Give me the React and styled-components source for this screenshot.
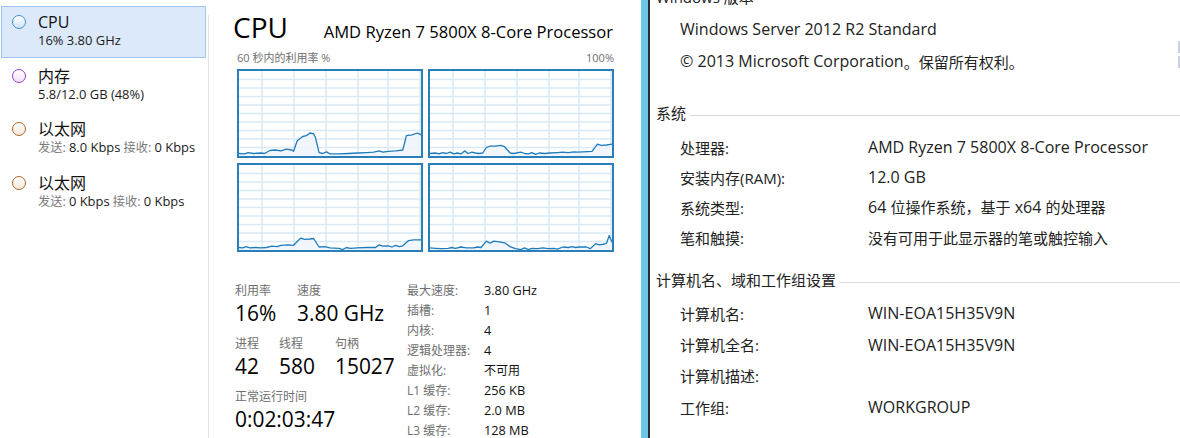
import React from "react";
import styled, { createGlobalStyle } from "styled-components";

const FONT = `"Open Sans", "Noto Sans CJK SC", sans-serif`;

const GlobalStyle = createGlobalStyle`
  html, body {
    margin: 0;
    padding: 0;
    background: #ffffff;
  }
  body {
    font-family: ${FONT};
    color: #1a1a1a;
    overflow: hidden;
    --latin: 1.045;
  }
  * {
    box-sizing: border-box;
  }
`;

const Latin = styled.span`
  font-size: calc(var(--latin) * 1em);
`;

const CJK_RUN = /([\u2e80-\u9fff\u3000-\u303f\uff00-\uffef]+)/;

const T = ({ children }) =>
  String(children)
    .split(CJK_RUN)
    .map((s, i) => (i % 2 ? s : s ? <Latin key={i}>{s}</Latin> : null));

const Page = styled.div`
  display: flex;
  width: 1180px;
  height: 438px;
  overflow: hidden;
`;

/* ---------- sidebar ---------- */

const Sidebar = styled.div`
  width: 209px;
  flex-shrink: 0;
  padding-top: 6px;
  position: relative;

  &::after {
    content: "";
    position: absolute;
    right: 0;
    top: 15px;
    bottom: 0;
    width: 1px;
    background: #e4e4e4;
  }
`;

const Item = styled.div`
  display: flex;
  width: 205px;
  height: 52px;
  margin: 0 0 1.6px 1px;
  padding: 6px 0 0 10px;
  border: 1px solid ${(p) => (p.$active ? "#9dc6ef" : "transparent")};
  background: ${(p) => (p.$active ? "#dbe9fb" : "transparent")};
  gap: 12px;
`;

const Dot = styled.span`
  width: 14px;
  height: 14px;
  margin-top: 2px;
  border-radius: 50%;
  border: 1.5px solid ${(p) => p.$color};
  background: linear-gradient(180deg, #ffffff 0%, ${(p) => p.$fill} 100%);
  flex-shrink: 0;
`;

const ItemText = styled.div`
  display: flex;
  flex-direction: column;
`;

const ItemTitle = styled.div`
  font-size: 16px;
  line-height: 19px;
  color: #111;
  --latin: 1;
`;

const ItemSub = styled.div`
  font-size: 12.2px;
  line-height: 16px;
  color: #1a1a1a;
  white-space: nowrap;
  --latin: 1.06;
`;

const Muted = styled.span`
  color: #7a7a7a;
`;

/* ---------- task manager main ---------- */

const Main = styled.div`
  width: 432px;
  flex-shrink: 0;
  padding: 0 27px 0 28px;
`;

const Header = styled.div`
  display: flex;
  align-items: baseline;
  justify-content: space-between;
  height: 50px;
  padding-top: 9px;
  margin-left: -4px;
`;

const BigTitle = styled.div`
  font-size: 28px;
  line-height: 36px;
  color: #000;
  --latin: 1;
`;

const Model = styled.div`
  font-size: 16px;
  line-height: 24px;
  color: #000;
  margin-right: 1px;
  --latin: 1.036;
`;

const GraphCaption = styled.div`
  display: flex;
  justify-content: space-between;
  font-size: 11px;
  line-height: 16px;
  height: 19px;
  color: #6f6f6f;
  --latin: 1;
`;

const GraphGrid = styled.div`
  display: grid;
  grid-template-columns: 186px 186px;
  grid-template-rows: 89px 89px;
  gap: 5px;
`;

const GraphBox = styled.div`
  border: 2px solid #2a7fba;
  background: #ffffff;
  overflow: hidden;

  svg {
    display: block;
  }
`;

const Stats = styled.div`
  display: flex;
  margin-top: 28px;
  margin-left: -2px;
`;

const StatsLeft = styled.div`
  width: 172px;
  padding-top: 3px;
`;

const StatRow = styled.div`
  display: flex;
  margin-bottom: 8px;
`;

const Stat = styled.div`
  width: ${(p) => p.$w || "auto"};
`;

const StatLabel = styled.div`
  font-size: 12px;
  line-height: 16px;
  color: #6f6f6f;
  white-space: nowrap;
`;

const StatValue = styled.div`
  font-size: 20px;
  line-height: 28px;
  color: #000;
  white-space: nowrap;
`;

const Specs = styled.div`
  display: grid;
  grid-template-columns: 77px auto;
  grid-auto-rows: 20px;
  align-items: center;
  font-size: 12px;
  --latin: 1.06;
`;

const SpecLabel = styled.div`
  color: #6f6f6f;
  white-space: nowrap;
  --latin: 1;
`;

const SpecValue = styled.div`
  color: #111;
  white-space: nowrap;
`;

/* ---------- system properties ---------- */

const Divider = styled.div`
  width: 9px;
  flex-shrink: 0;
  background: #6ac9ea;
  border-right: 2px solid #2d2d2d;
`;

const Props = styled.div`
  flex: 1;
  position: relative;
  padding-left: 6px;
  font-size: 15px;
  color: #222;
  --latin: 1.07;
`;

const Section = styled.div`
  display: flex;
  align-items: center;
  height: 20px;
  margin-top: ${(p) => p.$mt}px;
  white-space: nowrap;

  &::after {
    content: "";
    flex: 1;
    height: 1px;
    margin: 6px 0 0 4px;
    background: #dadada;
  }
`;

const PropRows = styled.div`
  padding: ${(p) => p.$pt}px 0 0 24px;
`;

const PropRow = styled.div`
  display: flex;
  align-items: center;
  height: ${(p) => p.$h}px;
  white-space: nowrap;
`;

const PropLabel = styled.div`
  width: 188px;
  --latin: 1;
`;

const ScrollNub = styled.div`
  position: absolute;
  right: 0;
  top: 41px;
  width: 2px;
  height: 27px;
  border-top: 12px solid #c9d1e2;
  border-bottom: 12px solid #c9d1e2;
  background: #ffffff;
`;

/* ---------- graph data ---------- */

const graphs = [
  [[0,3],[0.03,2.5],[0.05,4],[0.08,3],[0.12,3.5],[0.14,3],[0.17,6.5],[0.2,7],[0.23,6],[0.26,8],[0.29,7],[0.3,5.5],[0.32,18],[0.35,23],[0.37,24],[0.39,27],[0.41,26],[0.42,22],[0.44,4],[0.46,3],[0.48,5],[0.5,2.5],[0.55,2.5],[0.6,3],[0.65,3.5],[0.7,4],[0.74,4.5],[0.77,6],[0.79,4.5],[0.82,5.5],[0.86,6],[0.9,7],[0.92,24],[0.95,25],[0.98,27],[1,25]],
  [[0,3],[0.03,3.5],[0.05,2.5],[0.07,4],[0.09,3],[0.11,4.5],[0.13,2.5],[0.15,3.5],[0.17,2.5],[0.19,6],[0.21,3],[0.23,4.5],[0.25,3.5],[0.27,3],[0.29,3.5],[0.31,10],[0.33,11.5],[0.36,11.5],[0.39,12.5],[0.41,11],[0.44,3.5],[0.46,3],[0.5,4.5],[0.52,3],[0.54,2.5],[0.56,4],[0.58,2],[0.6,3.5],[0.63,3],[0.66,3.5],[0.7,4],[0.73,4.5],[0.76,4],[0.79,5],[0.81,4.5],[0.84,5],[0.89,5.5],[0.92,14],[0.94,12.5],[0.97,13],[1,14]],
  [[0,3],[0.02,2.5],[0.04,4],[0.06,2.5],[0.09,3],[0.12,2.5],[0.15,3],[0.18,4.5],[0.21,4],[0.23,5.5],[0.27,6],[0.3,5.5],[0.32,10],[0.34,14],[0.36,12.5],[0.39,13],[0.41,13.5],[0.44,3.5],[0.47,4],[0.5,2.5],[0.55,2],[0.57,0.5],[0.59,3],[0.61,2],[0.65,2.5],[0.7,3],[0.75,3],[0.77,6],[0.79,4.5],[0.82,5],[0.84,3.5],[0.86,5.5],[0.88,4],[0.9,5],[0.93,11],[0.96,12],[1,12]],
  [[0,2.5],[0.03,2],[0.06,1.5],[0.1,2],[0.12,3],[0.14,2],[0.17,3.5],[0.2,2.5],[0.24,2.5],[0.26,3.5],[0.28,3],[0.31,10.5],[0.33,8],[0.35,10.5],[0.38,9.5],[0.41,8.5],[0.44,4],[0.47,1.5],[0.5,0.5],[0.52,2.5],[0.54,0.5],[0.56,2],[0.59,1.5],[0.62,2.5],[0.65,1.5],[0.68,2],[0.7,1],[0.73,3.5],[0.76,3],[0.78,4],[0.8,3],[0.82,3.5],[0.86,3.5],[0.88,1.5],[0.91,7.5],[0.93,6],[0.96,7],[0.97,8],[0.985,17],[1,9]],
];

const GW = 182;
const GH = 85;

const Graph = ({ data }) => {
  const pts = data.map(([x, v]) => [x * GW, GH - (v / 100) * GH]);
  const line = pts.map(([x, y]) => `${x.toFixed(1)},${y.toFixed(1)}`).join(" ");
  const area = `0,${GH} ${line} ${GW},${GH}`;
  const vLines = [23, 55, 87, 119, 149, 181];
  const hLines = Array.from({ length: 9 }, (_, i) => ((i + 1) * GH) / 10);
  return (
    <GraphBox>
      <svg width={GW} height={GH} viewBox={`0 0 ${GW} ${GH}`}>
        {hLines.map((y) => (
          <line key={"h" + y} x1="0" x2={GW} y1={y} y2={y} stroke="#d9e9f6" strokeWidth="1.5" />
        ))}
        {vLines.map((x) => (
          <line key={"v" + x} x1={x} x2={x} y1="0" y2={GH} stroke="#d9e9f6" strokeWidth="1.5" />
        ))}
        <polygon points={area} fill="#eef5fb" fillOpacity="0.85" />
        <polyline points={line} fill="none" stroke="#1e7cbc" strokeWidth="1.3" strokeLinejoin="round" />
      </svg>
    </GraphBox>
  );
};

const sidebarItems = [
  { key: "cpu", title: "CPU", color: "#3f8fd2", fill: "#cfe3f6", active: true, sub: <T>16% 3.80 GHz</T> },
  { key: "mem", title: "内存", color: "#9b3fc6", fill: "#f1e1f7", sub: <T>5.8/12.0 GB (48%)</T> },
  {
    key: "eth1",
    title: "以太网",
    color: "#b0682a",
    fill: "#f6e6d8",
    sub: (
      <>
        <Muted><T>发送:</T></Muted> <T>8.0 Kbps</T> <Muted><T>接收:</T></Muted> <T>0 Kbps</T>
      </>
    ),
  },
  {
    key: "eth2",
    title: "以太网",
    color: "#b0682a",
    fill: "#f6e6d8",
    sub: (
      <>
        <Muted><T>发送:</T></Muted> <T>0 Kbps</T> <Muted><T>接收:</T></Muted> <T>0 Kbps</T>
      </>
    ),
  },
];

const specs = [
  ["最大速度:", "3.80 GHz"],
  ["插槽:", "1"],
  ["内核:", "4"],
  ["逻辑处理器:", "4"],
  ["虚拟化:", "不可用"],
  ["L1 缓存:", "256 KB"],
  ["L2 缓存:", "2.0 MB"],
  ["L3 缓存:", "128 MB"],
];

const systemRows = [
  ["处理器:", "AMD Ryzen 7 5800X 8-Core Processor"],
  ["安装内存(RAM):", "12.0 GB"],
  ["系统类型:", "64 位操作系统，基于 x64 的处理器"],
  ["笔和触摸:", "没有可用于此显示器的笔或触控输入"],
];

const computerRows = [
  ["计算机名:", "WIN-EOA15H35V9N"],
  ["计算机全名:", "WIN-EOA15H35V9N"],
  ["计算机描述:", ""],
  ["工作组:", "WORKGROUP"],
];

const App = () => (
  <>
    <GlobalStyle />
    <Page>
      <Sidebar>
        {sidebarItems.map((it) => (
          <Item key={it.key} $active={it.active}>
            <Dot $color={it.color} $fill={it.fill} />
            <ItemText>
              <ItemTitle>{it.title}</ItemTitle>
              <ItemSub>{it.sub}</ItemSub>
            </ItemText>
          </Item>
        ))}
      </Sidebar>

      <Main>
        <Header>
          <BigTitle>CPU</BigTitle>
          <Model><T>AMD Ryzen 7 5800X 8-Core Processor</T></Model>
        </Header>
        <GraphCaption>
          <span>60 秒内的利用率 %</span>
          <span>100%</span>
        </GraphCaption>
        <GraphGrid>
          {graphs.map((g, i) => (
            <Graph key={i} data={g} />
          ))}
        </GraphGrid>
        <Stats>
          <StatsLeft>
            <StatRow>
              <Stat $w="62px">
                <StatLabel>利用率</StatLabel>
                <StatValue><T>16%</T></StatValue>
              </Stat>
              <Stat>
                <StatLabel>速度</StatLabel>
                <StatValue><T>3.80 GHz</T></StatValue>
              </Stat>
            </StatRow>
            <StatRow>
              <Stat $w="44px">
                <StatLabel>进程</StatLabel>
                <StatValue><T>42</T></StatValue>
              </Stat>
              <Stat $w="56px">
                <StatLabel>线程</StatLabel>
                <StatValue><T>580</T></StatValue>
              </Stat>
              <Stat>
                <StatLabel>句柄</StatLabel>
                <StatValue><T>15027</T></StatValue>
              </Stat>
            </StatRow>
            <StatRow>
              <Stat>
                <StatLabel>正常运行时间</StatLabel>
                <StatValue><T>0:02:03:47</T></StatValue>
              </Stat>
            </StatRow>
          </StatsLeft>
          <Specs>
            {specs.map(([l, v]) => (
              <React.Fragment key={l}>
                <SpecLabel><T>{l}</T></SpecLabel>
                <SpecValue><T>{v}</T></SpecValue>
              </React.Fragment>
            ))}
          </Specs>
        </Stats>
      </Main>

      <Divider />

      <Props>
        <Section $mt={-14}>Windows 版本</Section>
        <PropRows $pt={7}>
          <PropRow $h={32}><T>Windows Server 2012 R2 Standard</T></PropRow>
          <PropRow $h={32}><T>© 2013 Microsoft Corporation。保留所有权利。</T></PropRow>
        </PropRows>
        <Section $mt={25}>系统</Section>
        <PropRows $pt={10}>
          {systemRows.map(([l, v]) => (
            <PropRow key={l} $h={30.2}>
              <PropLabel><T>{l}</T></PropLabel>
              <div><T>{v}</T></div>
            </PropRow>
          ))}
        </PropRows>
        <Section $mt={17}>计算机名、域和工作组设置</Section>
        <PropRows $pt={8}>
          {computerRows.map(([l, v]) => (
            <PropRow key={l} $h={31.3}>
              <PropLabel><T>{l}</T></PropLabel>
              <div>{v ? <T>{v}</T> : null}</div>
            </PropRow>
          ))}
        </PropRows>
        <ScrollNub />
      </Props>
    </Page>
  </>
);

export default App;
